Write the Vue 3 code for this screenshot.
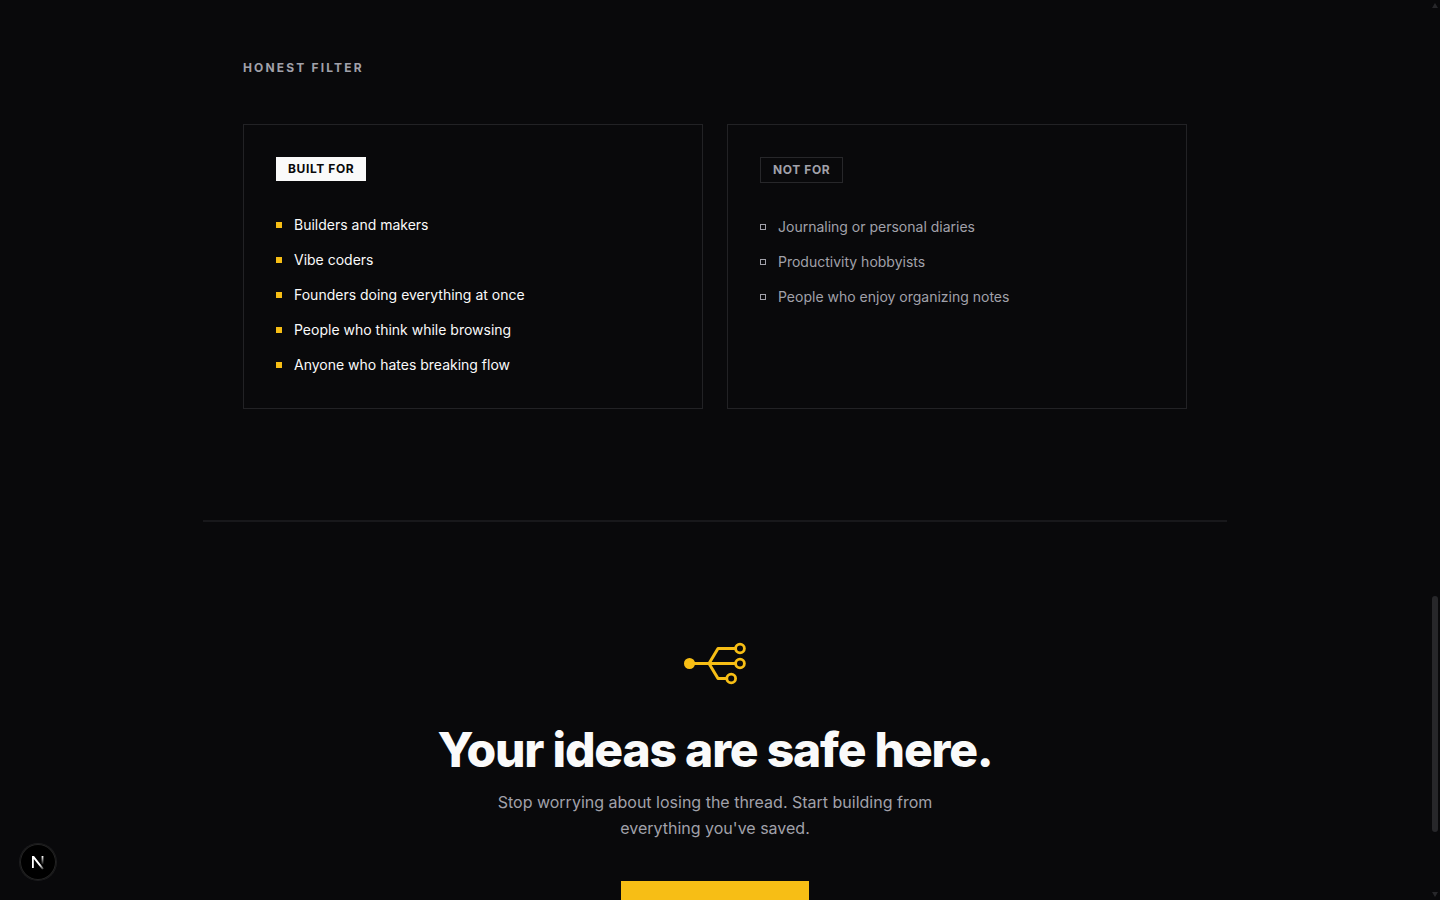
<template>
  <div class="page">
    <main class="content">
      <section class="filter">
        <h2 class="eyebrow">Honest Filter</h2>

        <div class="cards">
          <div class="card">
            <h3 class="badge badge-solid">Built for</h3>
            <ul class="list">
              <li v-for="item in builtFor" :key="item">
                <span class="marker"></span>{{ item }}
              </li>
            </ul>
          </div>

          <div class="card">
            <h3 class="badge badge-outline">Not for</h3>
            <ul class="list list-muted">
              <li v-for="item in notFor" :key="item">
                <span class="marker"></span>{{ item }}
              </li>
            </ul>
          </div>
        </div>
      </section>

      <section class="cta">
        <svg class="logo" viewBox="0 0 64 44" fill="none" stroke="currentColor" stroke-width="3" aria-hidden="true">
          <circle cx="6.5" cy="22.5" r="5.5" fill="currentColor" stroke="none" />
          <path d="M6 22.5H52M26 22.5L35 7.5H52M26 22.5L35 37.5H43.5" stroke-linejoin="round" />
          <circle cx="57" cy="7.5" r="4.4" stroke-width="2.8" />
          <circle cx="57" cy="22.5" r="4.4" stroke-width="2.8" />
          <circle cx="48.2" cy="37.5" r="4.4" stroke-width="2.8" />
        </svg>
        <h2 class="title">Your ideas are safe here.</h2>
        <p class="subtitle">Stop worrying about losing the thread. Start building from everything you've saved.</p>
        <button class="cta-button" type="button" aria-label="Get started"></button>
      </section>
    </main>

    <div class="scrollbar" aria-hidden="true">
      <span class="arrow arrow-up"></span>
      <span class="thumb"></span>
      <span class="arrow arrow-down"></span>
    </div>

    <button class="dev-button" type="button" aria-label="Open dev tools">
      <svg viewBox="0 0 36 36" fill="none" aria-hidden="true">
        <defs>
          <linearGradient id="diagonal" x1="17" y1="17" x2="24" y2="26" gradientUnits="userSpaceOnUse">
            <stop offset="0.4" stop-color="#fff" />
            <stop offset="1" stop-color="#fff" stop-opacity="0.1" />
          </linearGradient>
          <linearGradient id="stem" x1="0" y1="12" x2="0" y2="21" gradientUnits="userSpaceOnUse">
            <stop stop-color="#fff" />
            <stop offset="1" stop-color="#fff" stop-opacity="0" />
          </linearGradient>
        </defs>
        <path d="M12 12H14L23.8 24.4L22.2 25.6L13.8 15V24H12Z" fill="url(#diagonal)" />
        <path d="M21.6 12H23.4V20.5H21.6Z" fill="url(#stem)" />
      </svg>
    </button>
  </div>
</template>

<script setup>
import { ref } from 'vue';

const builtFor = ref([
  'Builders and makers',
  'Vibe coders',
  'Founders doing everything at once',
  'People who think while browsing',
  'Anyone who hates breaking flow'
]);

const notFor = ref([
  'Journaling or personal diaries',
  'Productivity hobbyists',
  'People who enjoy organizing notes'
]);
</script>

<style>
body {
  background: #09090b;
}
</style>

<style scoped>
.page {
  height: 100vh;
  overflow: hidden;
  box-sizing: border-box;
  padding-right: 10px;
  background: #09090b;
  color: #fafafa;
  font-family: Inter, "Liberation Sans", sans-serif;
}

.content {
  max-width: 1024px;
  margin: 0 auto;
}

h2,
h3,
p,
ul {
  margin: 0;
  padding: 0;
}

.filter {
  padding: 60px 40px 111px;
  border-bottom: 2px solid #18181b;
}

.eyebrow {
  margin-bottom: 48px;
  font-size: 12px;
  line-height: 16px;
  font-weight: 700;
  letter-spacing: 0.18em;
  text-transform: uppercase;
  color: #a1a1aa;
}

.cards {
  display: grid;
  grid-template-columns: 1fr 1fr;
  gap: 24px;
}

.card {
  display: flex;
  flex-direction: column;
  align-items: flex-start;
  padding: 32px;
  border: 1px solid #222225;
}

.badge {
  margin-bottom: 32px;
  padding: 4px 12px;
  font-size: 12px;
  line-height: 16px;
  font-weight: 700;
  letter-spacing: 0.05em;
  text-transform: uppercase;
}

.badge-solid {
  background: #fafafa;
  color: #09090b;
}

.badge-outline {
  border: 1px solid #27272a;
  color: #a1a1aa;
}

.list {
  display: flex;
  flex-direction: column;
  gap: 12px;
  list-style: none;
  font-size: 14px;
  line-height: 23px;
}

.list li {
  display: flex;
  align-items: center;
  gap: 12px;
}

.marker {
  box-sizing: border-box;
  width: 6px;
  height: 6px;
  background: #f7be15;
}

.list-muted {
  color: #a1a1aa;
}

.list-muted .marker {
  border: 1px solid #a1a1aa;
  background: none;
}

.cta {
  display: flex;
  flex-direction: column;
  align-items: center;
  padding: 119px 40px 0;
  text-align: center;
}

.logo {
  width: 64px;
  height: 44px;
  margin-bottom: 40px;
  color: #f7be15;
}

.title {
  margin-bottom: 14px;
  font-size: 48px;
  line-height: 50px;
  font-weight: 800;
  letter-spacing: -0.025em;
}

.subtitle {
  max-width: 448px;
  margin-bottom: 40px;
  font-size: 16px;
  line-height: 26px;
  color: #a1a1aa;
}

.cta-button {
  width: 188px;
  height: 48px;
  flex-shrink: 0;
  border: 0;
  background: #f7be15;
  cursor: pointer;
}

.scrollbar {
  position: fixed;
  top: 0;
  right: 0;
  bottom: 0;
  width: 10px;
}

.thumb {
  position: absolute;
  top: 66.2%;
  right: 2px;
  width: 6px;
  height: 26.3%;
  border-radius: 3px;
  background: #27272a;
}

.arrow {
  position: absolute;
  right: 2px;
  border-left: 3px solid transparent;
  border-right: 3px solid transparent;
}

.arrow-up {
  top: 3px;
  border-bottom: 5px solid #27272a;
}

.arrow-down {
  bottom: 3px;
  border-top: 5px solid #27272a;
}

.dev-button {
  position: fixed;
  bottom: 20px;
  left: 20px;
  width: 36px;
  height: 36px;
  padding: 0;
  border: 0;
  border-radius: 50%;
  background: #000;
  box-shadow: inset 0 0 0 1px #242424, 0 0 0 1px #1c1c1e;
  cursor: pointer;
}

.dev-button svg {
  display: block;
  width: 36px;
  height: 36px;
}
</style>
